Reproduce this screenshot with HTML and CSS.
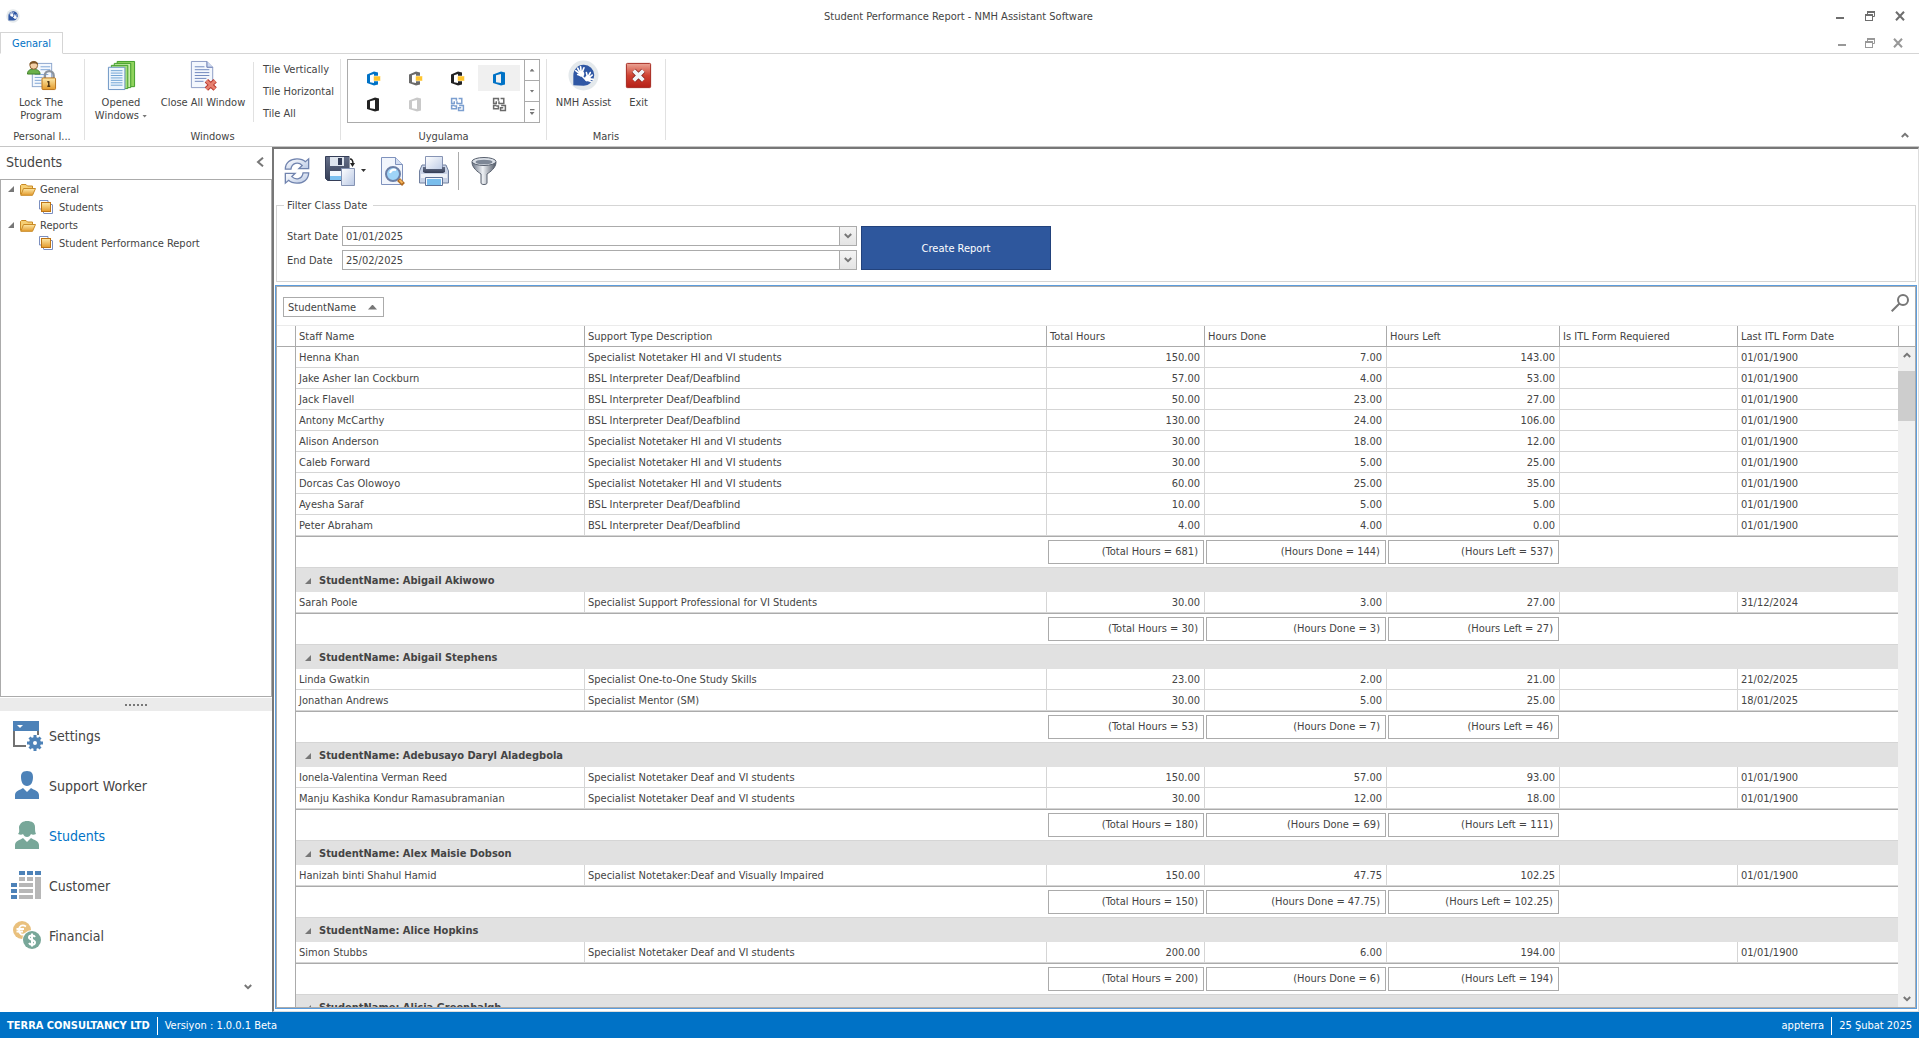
FILE: index.html
```
<!DOCTYPE html>
<html lang="en">

<head>
    <meta charset="utf-8">
    <title>Student Performance Report - NMH Assistant Software</title>
    <link rel="stylesheet" href="styles.css">
</head>

<body>
    <!-- shared symbols -->
    <svg class="defs" width="0" height="0">
        <defs>
            <linearGradient id="gOrange" x1="0" y1="0" x2="0" y2="1"><stop offset="0" stop-color="#fde9a8"/><stop offset="1" stop-color="#e39a2c"/></linearGradient>
            <linearGradient id="gRed" x1="0" y1="0" x2="0" y2="1"><stop offset="0" stop-color="#eba596"/><stop offset=".5" stop-color="#cf4232"/><stop offset="1" stop-color="#b51f17"/></linearGradient>
            <linearGradient id="gSteel" x1="0" y1="0" x2="1" y2="0"><stop offset="0" stop-color="#6b7484"/><stop offset=".45" stop-color="#eef1f5"/><stop offset="1" stop-color="#4d5563"/></linearGradient>
            <linearGradient id="gBlue" x1="0" y1="0" x2="1" y2="1"><stop offset="0" stop-color="#ffffff"/><stop offset="1" stop-color="#b9c8e4"/></linearGradient>
            <linearGradient id="gInk" x1="0" y1="0" x2="0" y2="1"><stop offset="0" stop-color="#667089"/><stop offset="1" stop-color="#343d55"/></linearGradient>
            <symbol id="hand" viewBox="0 0 32 32">
                <circle cx="16" cy="16" r="15.500" fill="#e4e9ec"/>
                <path d="M5.500 26V16a10.800 10.800 0 1 1 10.800 10.500z" fill="#2f57a4"/>
                <path d="M12.500 13l-2.500-4.500M13.500 12l-.5-5M14.500 13l2-5M12 14l-4-3M13 16l-3-1M20 17l-1-4M21 17l2-4M22 18l3-2.500M22 19.500l4 .5M21 21l3 1.500M15 17l4 4" stroke="#fff" stroke-width="1.700" stroke-linecap="round"/>
                <circle cx="14" cy="14.500" r="2.800" fill="#fff"/><circle cx="20.500" cy="19" r="3" fill="#fff"/>
            </symbol>
            <symbol id="folder" viewBox="0 0 16 13">
                <path d="M.5 11.500V2.500l1-1H6L7.500 3h5v3" fill="#f6cf74" stroke="#c98a25"/>
                <path d="M.8 12.300L3.500 5.500h12L12.500 12.300z" fill="url(#gOrange)" stroke="#c98a25"/>
            </symbol>
            <symbol id="stack" viewBox="0 0 14 14">
                <path d="M.5 9V.5H9" fill="none" stroke="#7b8fc0"/><path d="M13.500 5v8.500H5" fill="none" stroke="#7b8fc0"/>
                <path d="M.5 9H2M9 .5V2M12 4.500h1.500M4.500 12v1.500" stroke="#7b8fc0"/>
                <rect x="2.500" y="2.500" width="9" height="9" fill="url(#gOrange)" stroke="#bd7416"/>
            </symbol>
            <symbol id="office" viewBox="0 0 15 15">
                <path fill-rule="evenodd" d="M1 3.500L9 .5l4 1v12L9 14.500 1 12zM4 4.300v6.900l5 .8V3z" fill="currentColor"/>
            </symbol>
            <symbol id="officeTag" viewBox="0 0 15 15">
                <path fill-rule="evenodd" d="M1 3.500L8 .5l4 1v12L8 14.500 1 12zM4 4.300v6.900l4 .8V3z" fill="currentColor"/>
                <rect x="7.500" y="5" width="7" height="5" fill="#ffc52e" stroke="#fff" stroke-width=".5"/>
            </symbol>
            <symbol id="office10" viewBox="0 0 14 14">
                <path d="M6 3.500V1.500H1.500V6H4V4M8 1.500H11V6H6.500V4M4 8H1.500v3H6V8.500H4M8.500 8H12.500v4.500H8V10h2.500" fill="none" stroke="currentColor" stroke-width="1.400"/>
            </symbol>
            <symbol id="restore" viewBox="0 0 10 10">
                <path d="M2.500 3V.5h7v5H8" fill="none" stroke="currentColor"/><path d="M2 1h8" stroke="currentColor" stroke-width="2"/>
                <rect x=".5" y="3.500" width="7" height="6" fill="#fff" stroke="currentColor"/><path d="M0 4h8" stroke="currentColor" stroke-width="2"/>
            </symbol>
            <symbol id="min" viewBox="0 0 10 10"><rect x="1" y="6" width="8" height="2" fill="currentColor"/></symbol>
            <symbol id="close" viewBox="0 0 10 10"><path d="M1 .7l8 8.600M9 .7L1 9.300" stroke="currentColor" stroke-width="2"/></symbol>
            <symbol id="chev" viewBox="0 0 8 6"><path d="M.8 1L4 4.200 7.200 1" fill="none" stroke="currentColor" stroke-width="2"/></symbol>
            <symbol id="tri" viewBox="0 0 6 6"><path d="M6 0v6H0z" fill="currentColor"/></symbol>
        </defs>
    </svg>

    <header class="titlebar">
        <svg class="app-icon"><use href="#hand"/></svg>
        <h1>Student Performance Report - NMH Assistant Software</h1>
        <div class="win-btns">
            <button type="button" aria-label="Minimize"><svg><use href="#min"/></svg></button>
            <button type="button" aria-label="Restore"><svg><use href="#restore"/></svg></button>
            <button type="button" aria-label="Close"><svg><use href="#close"/></svg></button>
        </div>
    </header>

    <div class="tabs">
        <button type="button" class="tab">Genaral</button>
        <div class="win-btns child">
            <button type="button" aria-label="Minimize child"><svg><use href="#min"/></svg></button>
            <button type="button" aria-label="Restore child"><svg><use href="#restore"/></svg></button>
            <button type="button" aria-label="Close child"><svg><use href="#close"/></svg></button>
        </div>
    </div>

    <div class="ribbon">
        <section class="group g-personal">
            <div class="items">
                <button type="button" class="big">
                    <svg viewBox="0 0 32 32">
                        <rect x="6.500" y="3.500" width="20" height="24" fill="#f4f8fd" stroke="#8ca6cd"/>
                        <path d="M15 7h10M15 10h10M9 15h14M9 18h8M9 21h7M9 24h7" stroke="#7fa5d6"/>
                        <path d="M1.500 14.500c0-4 3-5 6-5s7 1 7 5z" fill="#6ab04a" stroke="#3f7f28"/>
                        <circle cx="8" cy="5.500" r="4" fill="#f3cfa6" stroke="#8c6032"/>
                        <path d="M3.500 5C3 0 13 0 12.500 5c-2-2-6-2-9 0z" fill="#7c5325"/>
                        <path d="M19.500 19v-3a4.500 4.500 0 0 1 9 0v3" fill="none" stroke="#8b939e" stroke-width="2.500"/>
                        <rect x="16.500" y="18.500" width="14" height="12" rx="1" fill="url(#gOrange)" stroke="#b8721a"/>
                        <path d="M23.500 22v5M22 22.500h2M22 27h3" stroke="#4d3413" stroke-width="1.500"/>
                    </svg>
                    <span>Lock The<br>Program</span>
                </button>
            </div>
            <h2>Personal I...</h2>
        </section>

        <section class="group g-windows">
            <div class="items">
                <button type="button" class="big opened">
                    <svg viewBox="0 0 32 32">
                        <path d="M11.500 1.500h18v26h-18z" fill="#8fd35d" stroke="#3f9c27"/>
                        <path d="M8.500 3.500h17v25h-17z" fill="#c9ecac" stroke="#3f9c27"/>
                        <path d="M5.500 5.500h17v24h-17z" fill="#a2dc78" stroke="#3f9c27"/>
                        <path d="M2.500 7.500h17v23h-17z" fill="#eef6fd" stroke="#6b94c4"/>
                        <path d="M5 11h12M5 13.500h12M5 16h12M5 18.500h12M5 21h12M5 23.500h12M5 26h12" stroke="#6fa3d4"/>
                    </svg>
                    <span>Opened<br>Windows <i class="drop"></i></span>
                </button>
                <button type="button" class="big closeall">
                    <svg viewBox="0 0 32 32">
                        <path d="M3.500 1.500h16l6 6v21h-22z" fill="#f3f7fd" stroke="#8b9bc4"/>
                        <path d="M19.500 1.500v6h6" fill="#cbd8ef" stroke="#6274ad"/>
                        <path d="M7 7h10M7 10h15M7 13h15M7 16h15M7 19h12M7 22h9" stroke="#6f87bd"/>
                        <path d="M19 21.500l9 8.500M28 21.500L19 30" stroke="#b8342a" stroke-width="5"/>
                        <path d="M19 21.500l9 8.500M28 21.500L19 30" stroke="#e6806f" stroke-width="3"/>
                    </svg>
                    <span>Close All Window</span>
                </button>
                <div class="tiles">
                    <button type="button">Tile Vertically</button>
                    <button type="button">Tile Horizontal</button>
                    <button type="button">Tile All</button>
                </div>
            </div>
            <h2>Windows</h2>
        </section>

        <section class="group g-skins">
            <div class="items">
                <div class="gallery">
                    <div class="skins">
                        <button type="button" class="c-blue" aria-label="Colorful"><svg><use href="#officeTag"/></svg></button>
                        <button type="button" class="c-gray" aria-label="Dark gray"><svg><use href="#officeTag"/></svg></button>
                        <button type="button" class="c-black" aria-label="Black"><svg><use href="#officeTag"/></svg></button>
                        <button type="button" class="c-blue selected" aria-label="White 2013"><svg><use href="#office"/></svg></button>
                        <button type="button" class="c-black" aria-label="Dark 2013"><svg><use href="#office"/></svg></button>
                        <button type="button" class="c-light" aria-label="Light 2013"><svg><use href="#office"/></svg></button>
                        <button type="button" class="c-sky" aria-label="Blue 2010"><svg><use href="#office10"/></svg></button>
                        <button type="button" class="c-gray" aria-label="Black 2010"><svg><use href="#office10"/></svg></button>
                    </div>
                    <div class="pager">
                        <button type="button" aria-label="Up"><i class="drop up"></i></button>
                        <button type="button" aria-label="Down"><i class="drop"></i></button>
                        <button type="button" aria-label="More"><i class="drop more"></i></button>
                    </div>
                </div>
            </div>
            <h2>Uygulama</h2>
        </section>

        <section class="group g-maris">
            <div class="items">
                <button type="button" class="big assist"><svg><use href="#hand"/></svg><span>NMH Assist</span></button>
                <button type="button" class="big exit">
                    <svg viewBox="0 0 32 32">
                        <rect x="3.500" y="3.500" width="25" height="25" rx="1" fill="url(#gRed)" stroke="#a3261d"/>
                        <path d="M11 11l10 10M21 11L11 21" stroke="#7f1d18" stroke-width="5.500"/>
                        <path d="M11 11l10 10M21 11L11 21" stroke="#f2f5f8" stroke-width="4"/>
                    </svg>
                    <span>Exit</span>
                </button>
            </div>
            <h2>Maris</h2>
        </section>
        <button type="button" class="collapse" aria-label="Collapse ribbon"><svg><use href="#chev"/></svg></button>
    </div>

    <div class="workspace">
        <aside class="sidebar">
            <div class="side-head">
                <h2>Students</h2>
                <button type="button" aria-label="Hide panel"><svg viewBox="0 0 8 10"><path d="M7 .7L2 5l5 4.300" fill="none" stroke="currentColor" stroke-width="2"/></svg></button>
            </div>
            <ul class="tree">
                <li><svg class="tri"><use href="#tri"/></svg><svg class="folder"><use href="#folder"/></svg>General</li>
                <li class="leaf"><svg class="stack"><use href="#stack"/></svg>Students</li>
                <li><svg class="tri"><use href="#tri"/></svg><svg class="folder"><use href="#folder"/></svg>Reports</li>
                <li class="leaf"><svg class="stack"><use href="#stack"/></svg>Student Performance Report</li>
            </ul>
            <div class="splitter"><i></i><i></i><i></i><i></i><i></i><i></i></div>
            <nav>
                <a href="#settings">
                    <svg viewBox="0 0 32 32">
                        <path d="M3 11h2v14h11v2H3z" fill="#727272"/><path d="M27 11h2v4h-2z" fill="#727272"/>
                        <rect x="3" y="1" width="26" height="10" fill="#4d82b8"/><path d="M7 5h6l-3 3z" fill="#fff"/>
                        <circle cx="25" cy="23" r="4" fill="none" stroke="#4d82b8" stroke-width="4"/>
                        <path d="M25 15v4M25 27v4M17 23h4M29 23h4M19.500 17.500l2.500 2.500M28 26l2.500 2.500M19.500 28.500l2.500-2.500M28 20l2.500-2.500" stroke="#4d82b8" stroke-width="3"/>
                    </svg>Settings</a>
                <a href="#workers">
                    <svg viewBox="0 0 32 32"><path d="M5 29v-4c0-4 5-5 8-7l4 4 4-4c3 2 8 3 8 7v4zM17 1c5 0 6 3 6 6 0 5-2 9-6 9s-6-4-6-9c0-3 1-6 6-6z" fill="#4d82b8"/></svg>Support Worker</a>
                <a href="#students" class="active">
                    <svg viewBox="0 0 32 32"><path d="M5 29v-4c0-4 5-5 8-7l4 4 4-4c3 2 8 3 8 7v4zM17 1c5 0 8 2 8 6 0 3 0 5 1 7-2 1-4 1-5 0-1 2-2 3-4 3s-3-1-4-3c-1 1-3 1-5 0 2-2 1-4 1-7 1-4 4-6 8-6z" fill="#78a799"/></svg>Students</a>
                <a href="#customer">
                    <svg viewBox="0 0 32 32">
                        <path d="M9 1h6v4H9zM17 1h6v4h-6zM25 1h6v4h-6zM1 13h6v4H1zM1 19h6v4H1zM1 25h6v4H1z" fill="#4d82b8"/>
                        <path d="M9 7h6v4H9zM17 7h6v4h-6zM9 13h14v4H9zM9 19h14v4H9zM9 25h14v4H9zM25 7h6v22h-6z" fill="#b7b7b7"/>
                    </svg>Customer</a>
                <a href="#financial">
                    <svg viewBox="0 0 32 32">
                        <circle cx="12" cy="10" r="9" fill="#e9c07d"/>
                        <path d="M16 6.500c-4-2.500-7-.5-7 3.500s3 6 7 3.500M6.500 9H14M6.500 11.500H13" fill="none" stroke="#fff" stroke-width="1.800"/>
                        <circle cx="22" cy="20" r="10" fill="#fff"/><circle cx="22" cy="20" r="9" fill="#78a799"/>
                        <path d="M25 17c-1-2-6-2-6 .5s6 2 6 5-5 2.500-6 .5M22 13.500v13" fill="none" stroke="#fff" stroke-width="2"/>
                    </svg>Financial</a>
            </nav>
            <button type="button" class="nav-more" aria-label="More"><svg><use href="#chev"/></svg></button>
        </aside>

        <main>
            <div class="toolbar">
                <button type="button" class="t-refresh" aria-label="Refresh">
                    <svg viewBox="0 0 30 30">
                        <path d="M2.500 13C2.500 6 8 2 15 2c4 0 7 1 9 3l3.500-3v10.500H17l3.500-3.500c-4-4-11-3-12 4z" fill="url(#gBlue)" stroke="#7083ae" stroke-width="1.400"/>
                        <path d="M27.500 17c0 7-5.500 11-12.500 11-4 0-7-1-9-3l-3.500 3V17.500H13L9.500 21c4 4 11 3 12-4z" fill="url(#gBlue)" stroke="#7083ae" stroke-width="1.400"/>
                    </svg>
                </button>
                <button type="button" class="t-save" aria-label="Save">
                    <svg viewBox="0 0 30 30">
                        <path d="M.5.500h24v24h-22l-2-2z" fill="url(#gInk)" stroke="#353e58"/>
                        <rect x="5" y="1" width="14" height="9" fill="#dfe5ee"/><rect x="13" y="2" width="4" height="7" fill="#353e58"/>
                        <rect x="5" y="15" width="15" height="9" fill="#f4f9fe"/><rect x="5" y="20" width="15" height="4" fill="#7cc1f0"/>
                        <path d="M24.500 0h6v12.500h-6z" fill="#fff"/>
                        <path d="M16.500 12.500h13v17h-13z" fill="url(#gBlue)" stroke="#8593b3"/>
                        <path d="M25 3c2 0 3 1 3 5" fill="none" stroke="#222" stroke-width="1.500"/><path d="M25 7h5l-2.500 4z" fill="#222"/>
                    </svg>
                    <i class="drop dark"></i>
                </button>
                <button type="button" class="t-preview" aria-label="Preview">
                    <svg viewBox="0 0 26 30">
                        <path d="M1.500 1.500h14l7 7v20h-21z" fill="#f1f5fc" stroke="#7f92bd"/><path d="M15.500 1.500v7h7" fill="#d3def2" stroke="#7f92bd"/>
                        <circle cx="13" cy="18" r="7" fill="#9fd4f7" stroke="#6b7fa6" stroke-width="2"/><path d="M10 17c1-3 3-4 6-3" fill="none" stroke="#fff" stroke-width="2"/>
                        <path d="M18.500 23.500l5 5" stroke="#b06a22" stroke-width="4"/><path d="M19.500 24l3 3" stroke="#f5b45a" stroke-width="2"/>
                    </svg>
                </button>
                <button type="button" class="t-print" aria-label="Print">
                    <svg viewBox="0 0 30 30">
                        <path d="M3 9h24l2.500 6v12H.5V15z" fill="#c9d3e6" stroke="#71809f"/>
                        <path d="M6.500.500h17v15h-17z" fill="url(#gBlue)" stroke="#8794b4"/>
                        <path d="M4 11h3v2h16v-2h3v5l-2 1H6l-2-1z" fill="url(#gInk)"/>
                        <rect x="2" y="18" width="26" height="4" fill="#eef2f8"/>
                        <path d="M6.500 21.500h17v8h-17z" fill="#f4f9ff" stroke="#5c7096"/><rect x="8" y="23" width="14" height="6" fill="#79bdec"/>
                    </svg>
                </button>
                <span class="tb-sep"></span>
                <button type="button" class="t-filter" aria-label="Filter">
                    <svg viewBox="0 0 26 30">
                        <path d="M1 6c0 6 6 10 9 12v9c0 2 6 2 6 0v-9c3-2 9-6 9-12z" fill="url(#gSteel)" stroke="#59616f"/>
                        <ellipse cx="13" cy="5.500" rx="12" ry="4" fill="#dce1e8" stroke="#59616f"/><ellipse cx="13" cy="6" rx="8.500" ry="2.300" fill="#7d8796"/>
                    </svg>
                </button>
            </div>

            <fieldset>
                <legend>Filter Class Date</legend>
                <div class="dates">
                    <label for="start">Start Date</label>
                    <div class="edit"><input type="text" id="start" value="01/01/2025"><button type="button" aria-label="Pick start date"><svg><use href="#chev"/></svg></button></div>
                    <label for="end">End Date</label>
                    <div class="edit"><input type="text" id="end" value="25/02/2025"><button type="button" aria-label="Pick end date"><svg><use href="#chev"/></svg></button></div>
                </div>
                <button type="button" class="create">Create Report</button>
            </fieldset>

            <div class="grid">
                <div class="group-panel">
                    <button type="button" class="group-by">StudentName <i class="sort"></i></button>
                    <button type="button" class="search" aria-label="Search"><svg viewBox="0 0 18 18"><circle cx="12" cy="6" r="5" fill="none" stroke="currentColor" stroke-width="2"/><path d="M8.500 9.500L.7 17.300" stroke="currentColor" stroke-width="2"/></svg></button>
                </div>
                <div class="grid-body">
                    <div class="table-wrap">
                        <table>
                            <colgroup>
                                <col class="c-indent"><col class="c-staff"><col><col class="c-total"><col class="c-done"><col class="c-left"><col class="c-itl"><col class="c-last">
                            </colgroup>
                            <thead>
                                <tr><th></th><th>Staff Name</th><th>Support Type Description</th><th>Total Hours</th><th>Hours Done</th><th>Hours Left</th><th>Is ITL Form Requiered</th><th>Last ITL Form Date</th></tr>
                            </thead>
                            <tbody id="rows"></tbody>
                        </table>
                    </div>
                    <div class="scroll">
                        <div class="scroll-head"></div>
                        <div class="scroll-track">
                            <svg class="flip"><use href="#chev"/></svg>
                            <div class="thumb"></div>
                            <svg><use href="#chev"/></svg>
                        </div>
                    </div>
                </div>
            </div>
        </main>
    </div>

    <footer class="status">
        <strong>TERRA CONSULTANCY LTD</strong>
        <span class="version">Versiyon : 1.0.0.1 Beta</span>
        <span class="user">appterra</span>
        <span class="today">25 Şubat 2025</span>
    </footer>

    <script>
var HI = 'Specialist Notetaker HI and VI students';
var BSL = 'BSL Interpreter Deaf/Deafblind';
var DEAF = 'Specialist Notetaker Deaf and VI students';

var groups = [
    { name: '', sum: ['681', '144', '537'], rows: [
        ['Henna Khan', HI, '150.00', '7.00', '143.00', '01/01/1900'],
        ['Jake Asher Ian Cockburn', BSL, '57.00', '4.00', '53.00', '01/01/1900'],
        ['Jack Flavell', BSL, '50.00', '23.00', '27.00', '01/01/1900'],
        ['Antony McCarthy', BSL, '130.00', '24.00', '106.00', '01/01/1900'],
        ['Alison Anderson', HI, '30.00', '18.00', '12.00', '01/01/1900'],
        ['Caleb Forward', HI, '30.00', '5.00', '25.00', '01/01/1900'],
        ['Dorcas Cas Olowoyo', HI, '60.00', '25.00', '35.00', '01/01/1900'],
        ['Ayesha Saraf', BSL, '10.00', '5.00', '5.00', '01/01/1900'],
        ['Peter Abraham', BSL, '4.00', '4.00', '0.00', '01/01/1900']
    ] },
    { name: 'Abigail Akiwowo', sum: ['30', '3', '27'], rows: [
        ['Sarah Poole', 'Specialist Support Professional for VI Students', '30.00', '3.00', '27.00', '31/12/2024']
    ] },
    { name: 'Abigail Stephens', sum: ['53', '7', '46'], rows: [
        ['Linda Gwatkin', 'Specialist One-to-One Study Skills', '23.00', '2.00', '21.00', '21/02/2025'],
        ['Jonathan Andrews', 'Specialist Mentor (SM)', '30.00', '5.00', '25.00', '18/01/2025']
    ] },
    { name: 'Adebusayo Daryl Aladegbola', sum: ['180', '69', '111'], rows: [
        ['Ionela-Valentina Verman Reed', DEAF, '150.00', '57.00', '93.00', '01/01/1900'],
        ['Manju Kashika Kondur Ramasubramanian', DEAF, '30.00', '12.00', '18.00', '01/01/1900']
    ] },
    { name: 'Alex Maisie Dobson', sum: ['150', '47.75', '102.25'], rows: [
        ['Hanizah binti Shahul Hamid', 'Specialist Notetaker:Deaf and Visually Impaired', '150.00', '47.75', '102.25', '01/01/1900']
    ] },
    { name: 'Alice Hopkins', sum: ['200', '6', '194'], rows: [
        ['Simon Stubbs', DEAF, '200.00', '6.00', '194.00', '01/01/1900']
    ] },
    { name: 'Alicia Greenhalgh', rows: [] }
];

var labels = ['Total Hours', 'Hours Done', 'Hours Left'];
var html = '';

groups.forEach(function (g) {
    if (g.name) {
        html += '<tr class="grp"><td></td><td colspan="7"><svg class="tri"><use href="#tri"/></svg>StudentName: ' + g.name + '</td></tr>';
    }
    g.rows.forEach(function (r) {
        html += '<tr><td></td><td>' + r[0] + '</td><td>' + r[1] + '</td>';
        html += '<td class="num">' + r[2] + '</td><td class="num">' + r[3] + '</td><td class="num">' + r[4] + '</td>';
        html += '<td></td><td>' + r[5] + '</td></tr>';
    });
    if (g.sum) {
        html += '<tr class="sum"><td></td><td colspan="2"></td>';
        g.sum.forEach(function (s, i) {
            html += '<td><div>(' + labels[i] + ' = ' + s + ')</div></td>';
        });
        html += '<td colspan="2"></td></tr>';
    }
});
document.getElementById('rows').innerHTML = html;
    </script>
</body>

</html>
```

FILE: styles.css
```
* {
    box-sizing: border-box;
}

body {
    margin: 0;
    height: 100vh;
    display: flex;
    flex-direction: column;
    overflow: hidden;
    background: #fff;
    color: #444;
    font: 11px/13px "DejaVu Sans Condensed", "DejaVu Sans", sans-serif;
}

h1, h2 {
    margin: 0;
    font-size: 11px;
    font-weight: normal;
}

button, input {
    margin: 0;
    padding: 0;
    border: 0;
    background: none;
    color: inherit;
    font: inherit;
}

svg {
    display: block;
    flex: none;
}

.defs {
    position: absolute;
}

/* title bar */
.titlebar {
    height: 32px;
    flex: none;
    display: grid;
    grid-template-columns: 1fr auto 1fr;
    align-items: center;
    padding: 0 14px 0 12px;
}

.app-icon {
    width: 14px;
    height: 14px;
    margin-left: -6px;
}

.win-btns {
    display: flex;
    justify-content: flex-end;
    gap: 20px;
    color: #6e6e6e;
}

.win-btns svg {
    width: 10px;
    height: 10px;
}

.win-btns.child {
    color: #989898;
    padding: 0 16px 0 0;
    gap: 18px;
}

.tabs {
    height: 22px;
    flex: none;
    display: flex;
    justify-content: space-between;
    align-items: center;
    border-bottom: 1px solid #d5d5d5;
}

.tab {
    width: 63px;
    height: 22px;
    padding-top: 2px;
    border: 1px solid #d5d5d5;
    border-bottom-color: #fff;
    background: #fff;
    color: #0072c6;
    position: relative;
}

/* ribbon */
.ribbon {
    height: 93px;
    flex: none;
    display: flex;
    border-bottom: 1px solid #c6c6c6;
    padding: 5px 10px 6px 0;
}

.group {
    display: flex;
    flex-direction: column;
    justify-content: space-between;
    text-align: center;
    border-right: 1px solid #e1e1e1;
}

.group h2 {
    line-height: 6px;
}

.items {
    display: flex;
    height: 67px;
}

.g-personal { width: 85px; }
.g-windows { width: 256px; }
.g-skins { width: 206px; }
.g-maris { width: 119px; }

.big {
    display: flex;
    flex-direction: column;
    align-items: center;
    gap: 5px;
    padding-top: 1px;
    white-space: nowrap;
}

.big svg {
    width: 31px;
    height: 31px;
}

.g-personal .big {
    width: 82px;
}

.opened { width: 72px; }
.closeall { width: 92px; }
.assist { width: 73px; }
.exit { width: 37px; }

.tiles {
    display: flex;
    flex-direction: column;
    align-items: flex-start;
    gap: 9px;
    height: 60px;
    margin: 3px 0 0 4px;
    padding: 1px 0 0 9px;
    border-left: 1px solid #e1e1e1;
    white-space: nowrap;
}

.drop {
    display: inline-block;
    width: 5px;
    height: 3px;
    background: #777;
    clip-path: polygon(0 0, 100% 0, 50% 100%);
    vertical-align: middle;
}

.drop.up {
    clip-path: polygon(50% 0, 100% 100%, 0 100%);
}

.drop.more {
    height: 6px;
    clip-path: polygon(0 0, 100% 0, 100% 20%, 0 20%, 0 50%, 100% 50%, 50% 100%, 0 50%);
}

.drop.dark {
    background: #333;
}

.gallery {
    display: flex;
    width: 193px;
    height: 64px;
    margin-left: 6px;
    border: 1px solid #ababab;
}

.skins {
    flex: 1;
    display: grid;
    grid-template-columns: repeat(4, 42px);
    grid-auto-rows: 26px;
    padding: 5px 4px;
}

.skins button {
    display: grid;
    place-items: center;
}

.skins svg {
    width: 15px;
    height: 15px;
}

.skins .selected {
    background: #f0f0f0;
}

.c-blue { color: #0072c6; }
.c-gray { color: #6a6a6a; }
.c-black { color: #222; }
.c-light { color: #c9c9c9; }
.c-sky { color: #7c9fd0; }

.pager {
    width: 15px;
    display: flex;
    flex-direction: column;
    border-left: 1px solid #ababab;
}

.pager button {
    flex: 1;
    display: grid;
    place-items: center;
}

.pager button + button {
    border-top: 1px solid #ababab;
}

.collapse {
    margin: auto 0 0 auto;
    padding-bottom: 2px;
    color: #777;
}

.collapse svg, .flip {
    transform: rotate(180deg);
}

.collapse svg, .nav-more svg, .edit svg, .scroll svg {
    width: 8px;
    height: 6px;
}

/* workspace */
.workspace {
    flex: 1;
    min-height: 0;
    display: flex;
}

.sidebar {
    width: 272px;
    flex: none;
    display: flex;
    flex-direction: column;
}

.side-head {
    height: 32px;
    flex: none;
    display: flex;
    justify-content: space-between;
    align-items: center;
    padding: 0 8px 2px 6px;
    color: #777;
}

.side-head h2 {
    font-size: 14px;
    color: #444;
}

.side-head svg {
    width: 8px;
    height: 10px;
}

.tree {
    flex: 1;
    margin: 0;
    padding: 0;
    list-style: none;
    border: 1px solid #ababab;
}

.tree li {
    height: 18px;
    display: flex;
    align-items: center;
    padding-left: 7px;
}

.tree .leaf {
    padding-left: 38px;
}

.tri {
    width: 6px;
    height: 6px;
    color: #777;
}

.folder {
    width: 16px;
    height: 13px;
    margin: 0 4px 0 6px;
}

.stack {
    width: 14px;
    height: 14px;
    margin-right: 6px;
}

.splitter {
    height: 13px;
    flex: none;
    margin-top: 1px;
    display: flex;
    justify-content: center;
    align-items: center;
    gap: 2px;
    background: #ebebeb;
}

.splitter i {
    width: 2px;
    height: 2px;
    background: #777;
}

nav a {
    height: 50px;
    display: flex;
    align-items: center;
    gap: 7px;
    padding-left: 10px;
    font-size: 14px;
    line-height: 18px;
    color: #444;
    text-decoration: none;
}

nav a.active {
    color: #0072c6;
}

nav svg {
    width: 32px;
    height: 32px;
    overflow: visible;
}

.nav-more {
    height: 51px;
    padding: 0 20px;
    margin-left: auto;
    color: #777;
}

/* document area */
main {
    flex: 1;
    min-width: 0;
    display: flex;
    flex-direction: column;
    border-style: solid;
    border-width: 2px 1px 1px 2px;
    border-color: #777 #ddd #ddd #777;
    padding: 0 1px 2px 1px;
}

.toolbar {
    display: flex;
    align-items: center;
    height: 43px;
    flex: none;
    padding-left: 8px;
}

.toolbar button {
    display: flex;
    align-items: center;
    height: 30px;
}

.toolbar svg {
    width: 30px;
    height: 30px;
}

.t-save {
    margin-left: 14px;
    gap: 6px;
}

.t-preview { margin-left: 14px; }
.t-print { margin-left: 13px; }
.t-filter { margin-left: 12px; }

.toolbar .t-preview svg, .toolbar .t-filter svg {
    width: 26px;
}

.toolbar .t-refresh svg {
    width: 28px;
    height: 28px;
}

.tb-sep {
    width: 1px;
    height: 38px;
    margin-left: 9px;
    background: #ababab;
}

fieldset {
    flex: none;
    display: flex;
    gap: 4px;
    min-width: 0;
    margin: 7px 1px 3px;
    padding: 14px 10px 11px;
    border: 1px solid #d5d5d5;
}

legend {
    margin-left: -3px;
    padding: 0 6px 0 3px;
}

.dates {
    flex: 0 1 570px;
    display: grid;
    grid-template-columns: 51px 1fr;
    column-gap: 4px;
    row-gap: 4px;
    align-items: center;
    white-space: nowrap;
}

.edit {
    display: flex;
    height: 20px;
    border: 1px solid #ababab;
}

.edit input {
    flex: 1;
    min-width: 0;
    padding: 0 3px;
    outline: none;
}

.edit button {
    width: 17px;
    display: grid;
    place-items: center;
    border-left: 1px solid #ababab;
    background: linear-gradient(#f4f4f4, #e4e4e4);
    color: #777;
}

.create {
    width: 190px;
    height: 44px;
    border: 1px solid #22427c;
    background: #2e579d;
    color: #fff;
}

/* report grid */
.grid {
    flex: 1;
    min-height: 0;
    display: flex;
    flex-direction: column;
    border: 1px solid #5c9ddd;
    box-shadow: inset 0 0 0 1px #ababab;
    padding: 1px;
}

.group-panel {
    height: 39px;
    flex: none;
    display: flex;
    justify-content: space-between;
    align-items: center;
    padding: 2px 6px 0;
    border-bottom: 1px solid #ebebeb;
}

.group-by {
    width: 101px;
    height: 20px;
    display: flex;
    align-items: center;
    justify-content: space-between;
    padding: 0 6px 0 4px;
    border: 1px solid #ababab;
}

.sort {
    width: 9px;
    height: 5px;
    background: #777;
    clip-path: polygon(50% 0, 100% 100%, 0 100%);
}

.search {
    color: #777;
    padding-bottom: 8px;
}

.search svg {
    width: 18px;
    height: 18px;
}

.grid-body {
    flex: 1;
    min-height: 0;
    display: flex;
}

.table-wrap {
    flex: 1;
    min-width: 0;
    overflow: hidden;
}

table {
    width: 100%;
    table-layout: fixed;
    border-collapse: separate;
    border-spacing: 0;
}

.c-indent { width: 19px; }
.c-staff { width: 289px; }
.c-total { width: 158px; }
.c-done { width: 182px; }
.c-left { width: 173px; }
.c-itl { width: 178px; }
.c-last { width: 160px; }

th, td {
    height: 21px;
    padding: 0 4px 0 3px;
    border-right: 1px solid #d5d5d5;
    border-bottom: 1px solid #d5d5d5;
    text-align: left;
    font-weight: normal;
    white-space: nowrap;
}

th {
    border-color: #ababab;
}

th:last-child, td:last-child {
    border-right: 0;
}

td:first-child {
    border-right-color: #ababab;
    border-bottom: 0;
}

.num {
    text-align: right;
}

.sum td {
    height: 31px;
    padding: 0 1px;
    border-right: 0;
    border-bottom: 0;
    border-top: 1px solid #ababab;
}

.sum td:first-child {
    border-top: 0;
    border-right: 1px solid #ababab;
}

.sum div {
    height: 24px;
    border: 1px solid #ababab;
    padding-right: 5px;
    line-height: 22px;
    text-align: right;
}

.grp td {
    height: 25px;
    border-bottom: 0;
    font-weight: bold;
}

.grp td:last-child {
    padding-left: 23px;
    border-top: 1px solid #d5d5d5;
    background: #e1e1e1;
}

.grp .tri {
    float: left;
    margin: 4px 8px 0 -14px;
}

.scroll {
    width: 17px;
    flex: none;
    display: flex;
    flex-direction: column;
}

.scroll-head {
    height: 21px;
    border-left: 1px solid #ababab;
    border-bottom: 1px solid #ababab;
}

.scroll-track {
    flex: 1;
    display: flex;
    flex-direction: column;
    align-items: center;
    padding: 5px 0;
    background: #f0f0f0;
    color: #777;
}

.thumb {
    width: 100%;
    height: 50px;
    margin: 13px 0 auto;
    background: #cdcdcd;
}

/* status bar */
.status {
    height: 26px;
    flex: none;
    display: flex;
    align-items: center;
    padding: 1px 7px 0;
    background: #0072c6;
    color: #fff;
    line-height: 18px;
}

.version, .today {
    margin-left: 7px;
    padding-left: 7px;
    border-left: 1px solid #fff;
}

.user {
    margin-left: auto;
}
```
